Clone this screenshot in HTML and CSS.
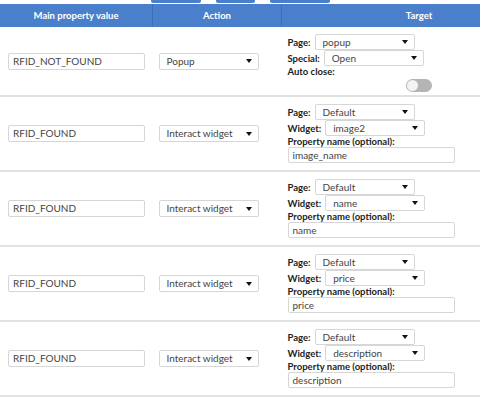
FILE: index.html
```html
<!DOCTYPE html>
<html>
	<head>
		<meta charset="utf-8" lang="en" />
		<title>Property actions</title>
		<link rel="stylesheet" href="styles.css">
	</head>

	<body>
		<div class="toolbar">
			<span class="btn btn-a"></span>
			<span class="btn btn-b"></span>
			<span class="btn btn-c"></span>
		</div>

		<table class="actions">
			<thead>
				<tr>
					<th class="col-value">Main property value</th>
					<th class="col-action">Action</th>
					<th class="col-target">Target</th>
				</tr>
			</thead>
			<tbody>
				<tr class="first">
					<td><div class="input wide">RFID_NOT_FOUND</div></td>
					<td><div class="select action"><span>Popup</span><i class="arrow"></i></div></td>
					<td class="target">
						<div class="line"><b>Page:</b><div class="select page"><span>popup</span><i class="arrow"></i></div></div>
						<div class="line"><b>Special:</b><div class="select page"><span>Open</span><i class="arrow"></i></div></div>
						<div class="label">Auto close:</div>
						<div class="toggle-wrap"><span class="toggle"><span class="knob"></span></span></div>
					</td>
				</tr>
				<tr>
					<td><div class="input wide">RFID_FOUND</div></td>
					<td><div class="select action"><span>Interact widget</span><i class="arrow"></i></div></td>
					<td class="target">
						<div class="line"><b>Page:</b><div class="select page"><span>Default</span><i class="arrow"></i></div></div>
						<div class="line"><b>Widget:</b><div class="select page"><span>image2</span><i class="arrow"></i></div></div>
						<div class="label">Property name (optional):</div>
						<div class="input prop">image_name</div>
					</td>
				</tr>
				<tr>
					<td><div class="input wide">RFID_FOUND</div></td>
					<td><div class="select action"><span>Interact widget</span><i class="arrow"></i></div></td>
					<td class="target">
						<div class="line"><b>Page:</b><div class="select page"><span>Default</span><i class="arrow"></i></div></div>
						<div class="line"><b>Widget:</b><div class="select page"><span>name</span><i class="arrow"></i></div></div>
						<div class="label">Property name (optional):</div>
						<div class="input prop">name</div>
					</td>
				</tr>
				<tr>
					<td><div class="input wide">RFID_FOUND</div></td>
					<td><div class="select action"><span>Interact widget</span><i class="arrow"></i></div></td>
					<td class="target">
						<div class="line"><b>Page:</b><div class="select page"><span>Default</span><i class="arrow"></i></div></div>
						<div class="line"><b>Widget:</b><div class="select page"><span>price</span><i class="arrow"></i></div></div>
						<div class="label">Property name (optional):</div>
						<div class="input prop">price</div>
					</td>
				</tr>
				<tr>
					<td><div class="input wide">RFID_FOUND</div></td>
					<td><div class="select action"><span>Interact widget</span><i class="arrow"></i></div></td>
					<td class="target">
						<div class="line"><b>Page:</b><div class="select page"><span>Default</span><i class="arrow"></i></div></div>
						<div class="line"><b>Widget:</b><div class="select page"><span>description</span><i class="arrow"></i></div></div>
						<div class="label">Property name (optional):</div>
						<div class="input prop">description</div>
					</td>
				</tr>
			</tbody>
		</table>
	</body>
</html>
```

FILE: styles.css
```css
body {
	color: #333;
	font-family: Lato, "Open Sans", sans-serif;
	font-size: 10px;
	margin: 0;
	overflow: hidden;
	padding: 0;
	width: 480px;
}

/* Toolbar buttons, scrolled almost out of view */
.toolbar {
	display: flex;
	height: 4px;
	padding-left: 151px;
}
.btn {
	background: #4a7fcb;
	border-radius: 0 0 2px 2px;
	display: block;
	height: 3px;
}
.btn-a { width: 50px; }
.btn-b { margin-left: 15px; width: 39px; }
.btn-c { margin-left: 15px; width: 60px; }

/* Table */
.actions {
	border-collapse: collapse;
	table-layout: fixed;
	width: 554px;
}
.actions th {
	background: #4a7fcb;
	border-left: 1px solid #3d6db3;
	color: #fff;
	font-size: 9.5px;
	font-weight: bold;
	height: 23px;
	padding: 0;
	text-align: center;
}
.actions th:first-child { border-left: 0; }
.col-value { width: 152px; }
.col-action { width: 128px; }
.col-target { width: 274px; }

.actions td {
	border-bottom: 2px solid #e2e2e2;
	box-sizing: border-box;
	height: 75px;
	padding: 0 0 0 8px;
	vertical-align: middle;
}
.actions tr.first td { height: 69px; }
.actions td:nth-child(2) { padding-left: 6px; }
.actions td.target {
	padding: 7px 0 0 6px;
	vertical-align: top;
}

/* Form controls */
.input,
.select {
	background: #fff;
	border: 1px solid #d6d6d6;
	border-radius: 2px;
	box-sizing: border-box;
	color: #444;
	height: 17px;
	line-height: 15px;
	white-space: nowrap;
}
.input { padding: 0 4px; }
.input.wide { width: 137px; }
.input.prop { height: 16px; line-height: 14px; width: 167px; }

.select {
	align-items: center;
	display: flex;
	justify-content: space-between;
	padding: 0 7px;
}
.select.action { width: 100px; }
.select.page {
	display: inline-flex;
	height: 16px;
	margin-left: 4px;
	width: 100px;
}
.arrow {
	border-left: 3px solid transparent;
	border-right: 3px solid transparent;
	border-top: 4px solid #111;
	display: block;
	height: 0;
	margin-right: -1px;
	width: 0;
}

.line {
	align-items: center;
	display: flex;
	height: 16px;
}
.line b,
.label {
	color: #222;
	font-size: 9.5px;
	font-weight: bold;
}
.label {
	height: 11px;
	line-height: 11px;
}

/* Toggle */
.toggle-wrap {
	display: flex;
	justify-content: center;
	margin: 2px 0 0 -6px;
}
.toggle {
	background: #b4b4b4;
	border-radius: 7px;
	display: block;
	height: 13px;
	position: relative;
	width: 26px;
}
.knob {
	background: #f4f4f4;
	border-radius: 50%;
	display: block;
	height: 11px;
	left: 1px;
	position: absolute;
	top: 1px;
	width: 11px;
}
```
